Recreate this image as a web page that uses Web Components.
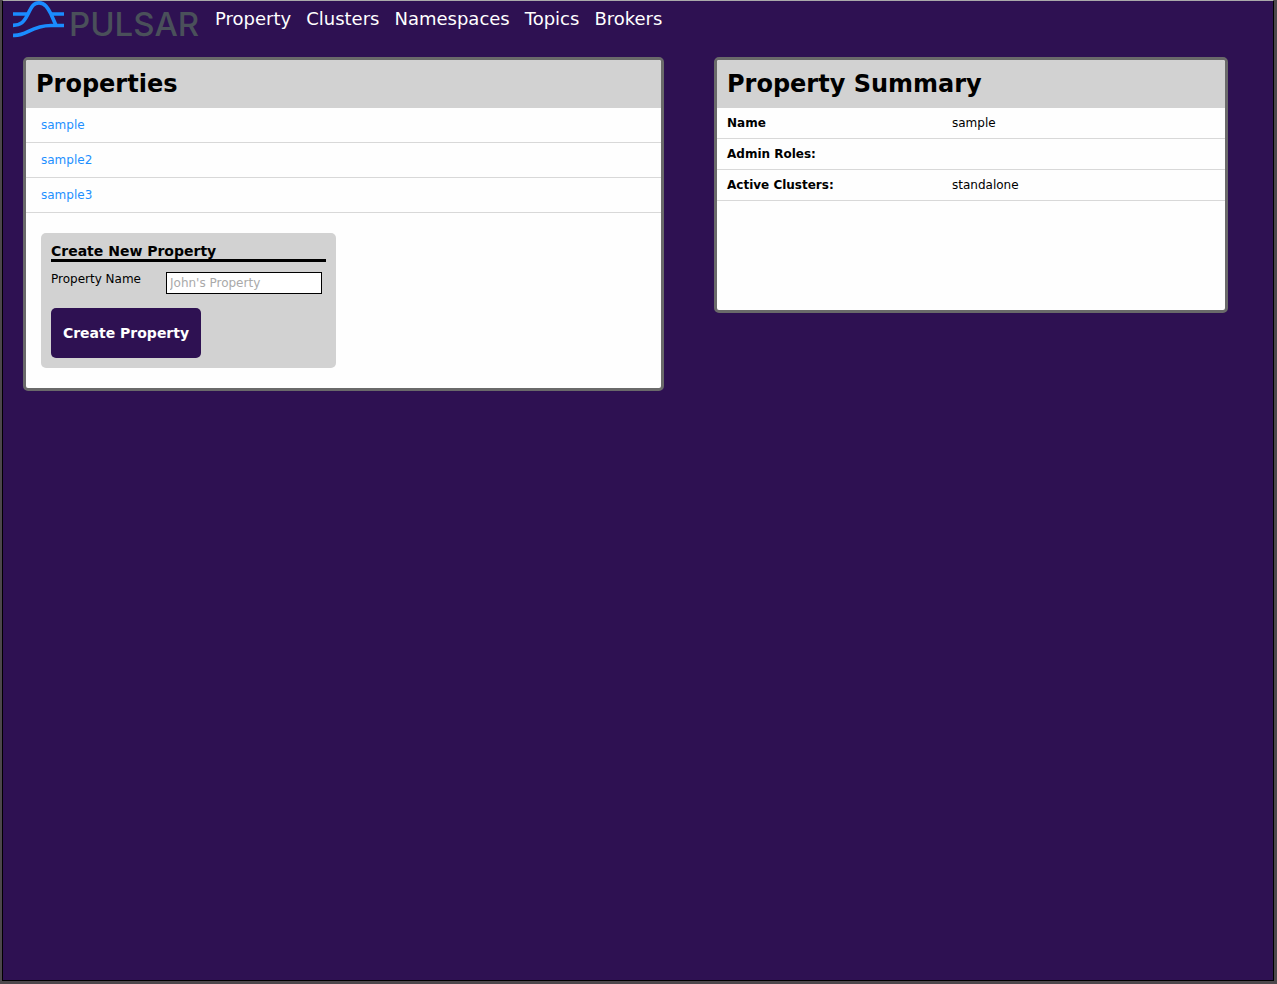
<!DOCTYPE html>
<html lang="en">
<head>
<meta charset="utf-8">
<title>Pulsar - Property</title>
<style>
html, body { margin: 0; background: #4d484c; }
body { font: 12px/15px "DejaVu Sans", Verdana, sans-serif; color: #000; }
</style>
</head>
<body>
<pulsar-app></pulsar-app>
<script>
const define = (name, html) => customElements.define(name, class extends HTMLElement {
  constructor() {
    super();
    const template = document.createElement('template');
    template.innerHTML = html;
    this.attachShadow({ mode: 'open' }).append(template.content.cloneNode(true));
  }
});

define('pulsar-logo', `
<style>
:host { display: block; width: 187px; }
a { display: flex; gap: 4px; height: 38px; color: #4a505a; text-decoration: none; }
svg { display: block; flex: none; }
span { font: 500 33px/46px Inter, sans-serif; }
</style>
<a href="#" aria-label="Pulsar home">
  <svg width="52" height="38" viewBox="0 0 52 38" fill="none" stroke="#1a8cff" stroke-width="3.7" aria-hidden="true">
    <path d="M0 13H15.500M37 13H51"/>
    <path d="M0 24.300C8 24.300 11 21 15 13C19 4.500 21 1.900 26 1.900C32 1.900 35 7 38 13L43 24.500"/>
    <path d="M0 34.300C14 35.500 17 24.500 38 24.500H51"/>
  </svg>
  <span>PULSAR</span>
</a>`);

define('nav-link', `
<style>
:host { display: block; }
a { color: #fff; font-size: 18px; line-height: 22px; text-decoration: none; }
</style>
<a href="#"><slot></slot></a>`);

define('top-bar', `
<style>
:host { display: flex; align-items: flex-start; gap: 15px; height: 36px; padding-left: 10px; }
nav { display: flex; gap: 15px; padding-top: 7px; }
</style>
<pulsar-logo></pulsar-logo>
<nav aria-label="Main">
  <nav-link>Property</nav-link><nav-link>Clusters</nav-link><nav-link>Namespaces</nav-link><nav-link>Topics</nav-link><nav-link>Brokers</nav-link>
</nav>`);

define('info-panel', `
<style>
:host { display: block; box-sizing: content-box; min-height: 250px; border: 3px solid #6a6a6a; border-radius: 5px; background: #fefefe; }
h2 { margin: 0; padding: 10px; font-size: 24px; line-height: 28px; background: #d2d2d2; border-radius: 2px 2px 0 0; }
</style>
<h2><slot name="title"></slot></h2>
<slot></slot>`);

define('property-list', `
<style>
:host { display: block; }
ul { list-style: none; margin: 0; padding: 0; }
li { padding: 10px 15px 9px; border-bottom: 1px solid #d8d8d8; }
a { color: #1e90ff; text-decoration: none; }
</style>
<ul>
  <li><a href="#">sample</a></li>
  <li><a href="#">sample2</a></li>
  <li><a href="#">sample3</a></li>
</ul>`);

define('create-form', `
<style>
:host { display: block; width: 275px; margin: 20px 15px; padding: 10px; background: #d2d2d2; border-radius: 5px; }
form { margin: 0; }
h3 { margin: 0 0 10px; font-size: 14px; line-height: 16px; border-bottom: 3px solid #000; }
.field { display: flex; align-items: flex-start; margin-bottom: 14px; }
label { width: 115px; }
input { box-sizing: border-box; width: 156px; height: 22px; margin: 0; padding: 1px 3px; border: 1px solid #000; border-radius: 0; background: #fff; font: inherit; }
input::placeholder { color: #a9a9a9; opacity: 1; }
button { display: block; width: 150px; height: 50px; margin: 0; padding: 0; border: 0; border-radius: 5px; background: #2e1152; color: #fff; font: bold 14px "DejaVu Sans", Verdana, sans-serif; }
</style>
<form>
  <h3>Create New Property</h3>
  <div class="field">
    <label for="property-name">Property Name</label>
    <input id="property-name" type="text" placeholder="John's Property">
  </div>
  <button type="button">Create Property</button>
</form>`);

define('property-summary', `
<style>
:host { display: block; }
table { width: 100%; table-layout: fixed; border-collapse: separate; border-spacing: 0; }
th, td { height: 15px; padding: 8px 0 7px; border-bottom: 1px solid #d8d8d8; text-align: left; }
th { width: 225px; padding-left: 10px; }
</style>
<table>
  <tr><th scope="row">Name</th><td>sample</td></tr>
  <tr><th scope="row">Admin Roles:</th><td></td></tr>
  <tr><th scope="row">Active Clusters:</th><td>standalone</td></tr>
</table>`);

define('pulsar-app', `
<style>
:host { display: flex; flex-direction: column; box-sizing: border-box; min-height: 100vh; padding: 0 3px 3px 2px; background: #4d484c; }
.page { flex: 1; border: 1px solid #000; border-top-color: #aaa; background: #2e1152; }
main { display: flex; align-items: flex-start; gap: 50px; padding: 20px; margin-right: -20px; }
.list { flex: none; width: calc((100vw - 7px) / 2); }
.summary { flex: none; width: calc((100vw - 7px) * 2 / 5); }
</style>
<div class="page">
  <top-bar></top-bar>
  <main>
    <info-panel class="list"><span slot="title">Properties</span><property-list></property-list><create-form></create-form></info-panel>
    <info-panel class="summary"><span slot="title">Property Summary</span><property-summary></property-summary></info-panel>
  </main>
</div>`);
</script>
</body>
</html>
